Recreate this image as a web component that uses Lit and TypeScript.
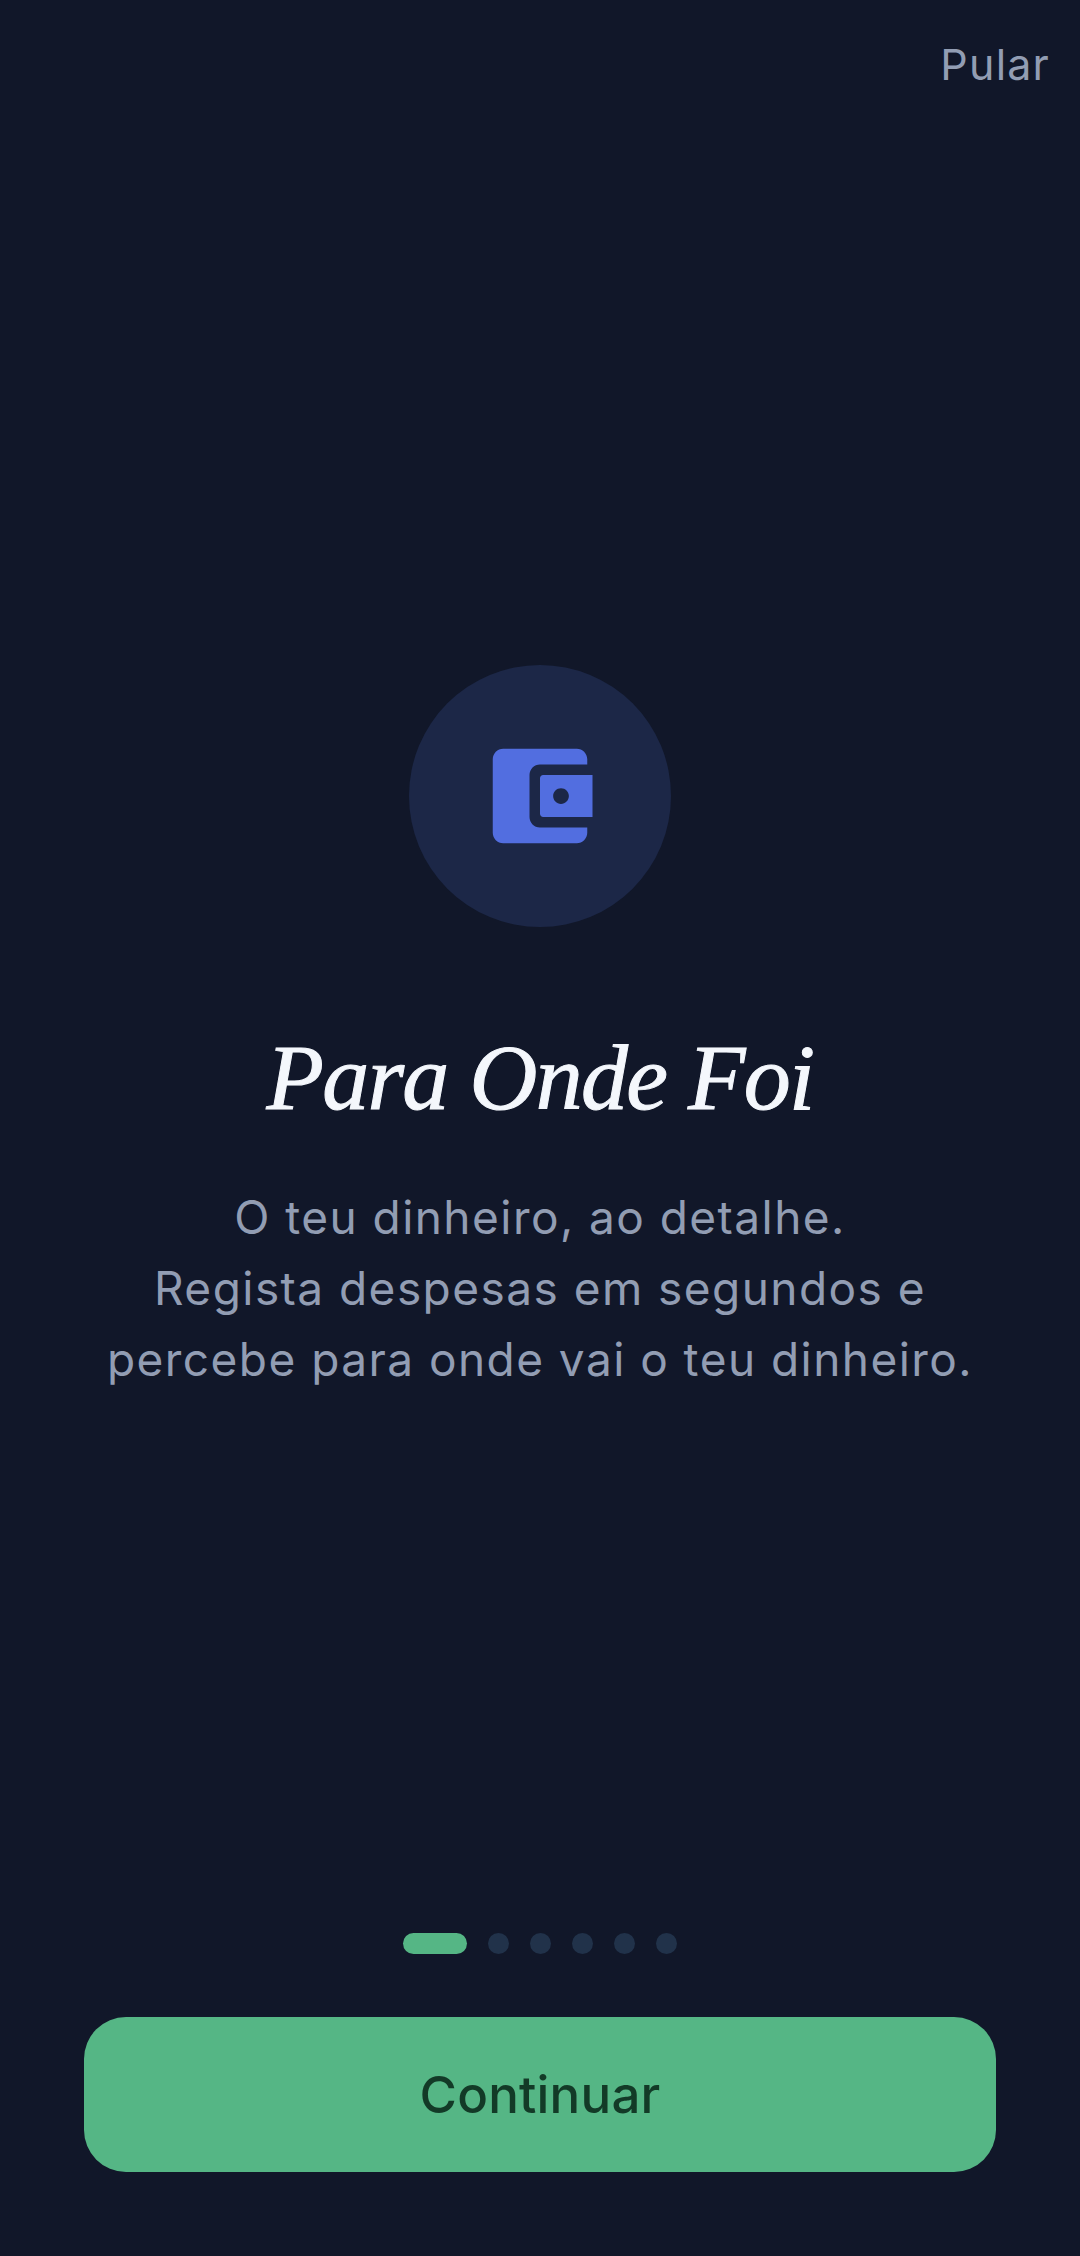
import { LitElement, html, css } from 'lit';
import { customElement } from 'lit/decorators.js';

const DOT_COUNT = 6;

@customElement('app-root')
export class AppRoot extends LitElement {
  static styles = css`
    :host {
      display: block;
    }

    .screen {
      box-sizing: border-box;
      height: 2256px;
      display: flex;
      flex-direction: column;
      background: #111729;
      font-family: Inter, sans-serif;
    }

    .top {
      display: flex;
      justify-content: flex-end;
      padding: 36px 30px 0;
    }

    .skip {
      font-size: 43px;
      line-height: 56px;
      letter-spacing: 1.2px;
      color: #929db3;
    }

    .content {
      display: flex;
      flex-direction: column;
      align-items: center;
      padding-top: 573px;
      flex: 1;
    }

    .circle {
      width: 262px;
      height: 262px;
      border-radius: 50%;
      background: #1c2747;
      display: flex;
      align-items: center;
      justify-content: center;
    }

    .circle svg {
      width: 126px;
      height: 126px;
      fill: #526ee0;
    }

    h1 {
      margin: 92px 0 0;
      font-family: 'Liberation Serif', serif;
      font-style: italic;
      font-weight: 400;
      font-size: 94px;
      line-height: 116px;
      letter-spacing: -1.7px;
      -webkit-text-stroke: 1px #f4f7fc;
      color: #f4f7fc;
    }

    p {
      margin: 47px 0 0;
      font-size: 46px;
      line-height: 71px;
      letter-spacing: 1.45px;
      text-align: center;
      color: #929db3;
    }

    .dots {
      display: flex;
      justify-content: center;
      gap: 21px;
    }

    .dot {
      width: 21px;
      height: 21px;
      border-radius: 50%;
      background: #21324a;
    }

    .dot.active {
      width: 64px;
      border-radius: 11px;
      background: #55b685;
    }

    .cta {
      margin: 63px 84px 84px;
      height: 155px;
      border-radius: 42px;
      background: #55b685;
      color: #133a27;
      display: flex;
      align-items: center;
      justify-content: center;
      font-size: 51px;
      font-weight: 500;
      letter-spacing: 0.2px;
    }
  `;

  render() {
    const dots = Array.from({ length: DOT_COUNT }, (_, i) => i);
    return html`
      <div class="screen">
        <div class="top"><span class="skip">Pular</span></div>
        <div class="content">
          <div class="circle">
            <svg viewBox="0 0 24 24">
              <path d="M21 18v1c0 1.1-.9 2-2 2H5c-1.11 0-2-.9-2-2V5c0-1.1.89-2 2-2h14c1.1 0 2 .9 2 2v1h-9c-1.11 0-2 .9-2 2v8c0 1.1.89 2 2 2h9z" />
              <path fill-rule="evenodd" d="M12.6 16H22V8h-9.4c-.33 0-.6.27-.6.6v6.8c0 .33.27.6.6.6zM16 13.5c-.83 0-1.5-.67-1.5-1.5s.67-1.5 1.5-1.5 1.5.67 1.5 1.5-.67 1.5-1.5 1.5z" />
            </svg>
          </div>
          <h1>Para Onde Foi</h1>
          <p>O teu dinheiro, ao detalhe.<br />Regista despesas em segundos e<br />percebe para onde vai o teu dinheiro.</p>
        </div>
        <div class="dots">
          ${dots.map((i) => html`<div class="dot ${i === 0 ? 'active' : ''}"></div>`)}
        </div>
        <div class="cta">Continuar</div>
      </div>
    `;
  }
}
